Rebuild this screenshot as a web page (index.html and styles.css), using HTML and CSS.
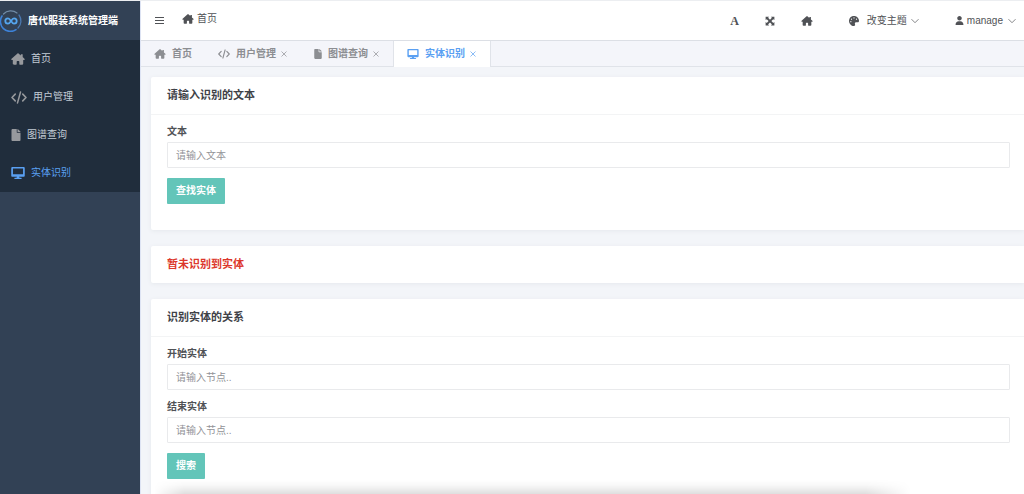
FILE: index.html
```html
<!DOCTYPE html>
<html lang="zh-CN">
<head>
<meta charset="utf-8">
<meta name="viewport" content="width=device-width, initial-scale=1">
<title>唐代服装系统管理端</title>
<link rel="stylesheet" href="styles.css">
</head>
<body>
<svg class="sprite" aria-hidden="true">
  <symbol id="home" viewBox="0 0 576 512"><path d="M510 296V456c0 22-18 40-40 40H368c-14 0-24-10-24-24V368c0-13-11-24-24-24H256c-13 0-24 11-24 24v104c0 14-10 24-24 24H106c-22 0-40-18-40-40V296H32c-30 0-42-36-20-56L266 18c13-11 31-11 44 0l98 86V64c0-9 7-16 16-16h48c9 0 16 7 16 16v110l76 66c22 20 10 56-20 56h-34z"/></symbol>
  <symbol id="code" viewBox="0 0 640 512"><path d="M170 120L40 256l130 136M470 120l130 136-130 136M380 40L260 472" fill="none" stroke="currentColor" stroke-width="62" stroke-linecap="round" stroke-linejoin="round"/></symbol>
  <symbol id="file" viewBox="0 0 384 512"><path d="M224 136V0H48C22 0 0 22 0 48v416c0 26 22 48 48 48h288c26 0 48-22 48-48V160H248c-13 0-24-11-24-24zM384 122v6H256V0h6c7 0 13 3 17 7l98 98c4 5 7 11 7 17z"/></symbol>
  <symbol id="desktop" viewBox="0 0 576 512"><path d="M528 0H48C21.500 0 0 21.500 0 48v320c0 26.500 21.500 48 48 48h192l-16 40h-72c-13.300 0-24 12-24 28s10.700 28 24 28h272c13.300 0 24-12 24-28s-10.700-28-24-28h-72l-16-40h192c26.500 0 48-21.500 48-48V48c0-26.500-21.500-48-48-48zm-24 310H72V66h432v244z"/></symbol>
  <symbol id="user" viewBox="0 0 448 512"><path d="M224 256c70.700 0 128-57.300 128-128S294.700 0 224 0 96 57.300 96 128s57.300 128 128 128zm46 48h-92C80 304 0 384 0 482c0 17 13 30 30 30h388c17 0 30-13 30-30 0-98-80-178-178-178z"/></symbol>
  <symbol id="palette" viewBox="0 0 512 512"><path d="M204.300 5C104.900 24.400 24.800 104.300 5.200 203.400c-37 187 131.700 326.400 258.800 306.700 41.200-6.400 61.400-54.600 42.500-91.700-23.100-45.400 9.900-98.400 60.900-98.400h79.700c35.800 0 64.800-29.600 64.900-65.300C511.500 97.100 368.100-26.900 204.300 5zM96 320c-17.700 0-32-14.300-32-32s14.300-32 32-32 32 14.300 32 32-14.300 32-32 32zm32-128c-17.700 0-32-14.300-32-32s14.300-32 32-32 32 14.300 32 32-14.300 32-32 32zm128-64c-17.700 0-32-14.300-32-32s14.300-32 32-32 32 14.300 32 32-14.300 32-32 32zm128 64c-17.700 0-32-14.300-32-32s14.300-32 32-32 32 14.300 32 32-14.300 32-32 32z"/></symbol>
  <symbol id="expand" viewBox="0 0 16 16"><path d="M1 1h5.500L5 2.800 8 5.800l3-3L9.500 1H15v5.500L13.200 5l-3 3 3 3L15 9.500V15H9.500l1.500-1.800-3-3-3 3L6.500 15H1V9.500L2.800 11l3-3-3-3L1 6.500z"/></symbol>
  <symbol id="menu" viewBox="0 0 9 9"><path d="M0 1.500h9M0 4.500h9M0 7.500h9" stroke="currentColor" stroke-width="1"/></symbol>
  <symbol id="down" viewBox="0 0 8 8"><path d="M.5 2.200L4 5.700l3.500-3.500" fill="none" stroke="currentColor" stroke-width=".7"/></symbol>
  <symbol id="close" viewBox="0 0 8 8"><path d="M1.500 1.500l5 5m0-5l-5 5" fill="none" stroke="currentColor" stroke-width=".7"/></symbol>
</svg>
<div class="app">
  <aside class="sidebar">
    <div class="brand">
      <svg class="logo" viewBox="0 0 22 22" aria-hidden="true">
        <g fill="none" stroke-linecap="round">
          <path d="M3.500 4A10 10 0 0 1 17 3" stroke="#718ca8" stroke-width="1.200"/>
          <path d="M19 5a10 10 0 0 1-1 13" stroke="#4b78b0" stroke-width="1.300"/>
          <path d="M16 19.700A10 10 0 0 1 2 6" stroke="#3d82d8" stroke-width="1.600"/>
          <path d="M11 11C9.500 8.800 8.900 8.300 8 8.300a2.700 2.700 0 0 0 0 5.400c1.200 0 1.900-1 3-2.700s1.800-2.700 3-2.700a2.700 2.700 0 0 1 0 5.400c-.9 0-1.500-.5-3-2.700z" stroke="#55a5ee" stroke-width="1.800"/>
        </g>
      </svg>
      <span>唐代服装系统管理端</span>
    </div>
    <nav class="nav">
      <a class="nav-item" href="#"><svg class="icon-lg"><use href="#home"/></svg>首页</a>
      <a class="nav-item" href="#"><svg class="icon-code"><use href="#code"/></svg>用户管理</a>
      <a class="nav-item" href="#"><svg class="icon-file"><use href="#file"/></svg>图谱查询</a>
      <a class="nav-item active" href="#"><svg class="icon-lg"><use href="#desktop"/></svg>实体识别</a>
    </nav>
  </aside>
  <div class="main">
    <header class="topbar">
      <button class="tool" type="button" aria-label="菜单"><svg class="icon-sm"><use href="#menu"/></svg></button>
      <a class="crumb" href="#"><svg class="icon"><use href="#home"/></svg>首页</a>
      <div class="tools">
        <button class="tool letter" type="button">A</button>
        <button class="tool" type="button" aria-label="全屏"><svg class="icon-sq"><use href="#expand"/></svg></button>
        <button class="tool" type="button" aria-label="主页"><svg class="icon"><use href="#home"/></svg></button>
      </div>
      <button class="tool theme" type="button"><svg class="icon-sq"><use href="#palette"/></svg><span>改变主题</span><svg class="tiny"><use href="#down"/></svg></button>
      <button class="tool account" type="button"><svg class="icon-sm"><use href="#user"/></svg><span>manage</span><svg class="tiny"><use href="#down"/></svg></button>
    </header>
    <nav class="tabs">
      <div class="tab"><a href="#"><svg class="icon"><use href="#home"/></svg>首页</a></div>
      <div class="tab"><a href="#"><svg class="icon"><use href="#code"/></svg>用户管理</a><button type="button" aria-label="关闭用户管理"><svg class="tiny"><use href="#close"/></svg></button></div>
      <div class="tab"><a href="#"><svg class="icon-tabfile"><use href="#file"/></svg>图谱查询</a><button type="button" aria-label="关闭图谱查询"><svg class="tiny"><use href="#close"/></svg></button></div>
      <div class="tab current"><a href="#"><svg class="icon"><use href="#desktop"/></svg>实体识别</a><button type="button" aria-label="关闭实体识别"><svg class="tiny"><use href="#close"/></svg></button></div>
    </nav>
    <main class="content">
      <section class="card">
        <h2 class="card-title">请输入识别的文本</h2>
        <form class="card-body roomy">
          <label for="text">文本</label>
          <input id="text" type="text" placeholder="请输入文本">
          <button class="submit" type="button">查找实体</button>
        </form>
      </section>
      <section class="card">
        <h2 class="card-title alert">暂未识别到实体</h2>
      </section>
      <section class="card">
        <h2 class="card-title">识别实体的关系</h2>
        <form class="card-body roomy">
          <label for="start">开始实体</label>
          <input id="start" type="text" placeholder="请输入节点..">
          <label for="end">结束实体</label>
          <input id="end" type="text" placeholder="请输入节点..">
          <button class="submit" type="button">搜索</button>
        </form>
      </section>
    </main>
  </div>
</div>
<div class="bottom-shade"></div>
</body>
</html>
```
FILE: styles.css
```css
* { box-sizing: border-box; }
body {
  margin: 0;
  height: 100vh;
  overflow: hidden;
  background: #f3f5f9;
  color: #505256;
  font: 10px/16px "Liberation Sans", "Noto Sans CJK SC", sans-serif;
}
a { color: inherit; text-decoration: none; }
button { padding: 0; border: 0; background: none; color: inherit; font: inherit; cursor: pointer; }
svg { display: block; flex: none; fill: currentColor; }
.sprite { position: absolute; width: 0; height: 0; }
.icon { width: 12px; height: 10px; }
.icon-lg { width: 14px; height: 12px; }
.icon-code { width: 16px; height: 13px; }
.icon-file { width: 10px; height: 12px; }
.icon-tabfile { width: 8px; height: 10px; }
.icon-sq { width: 10px; height: 10px; }
.icon-sm { width: 9px; height: 9px; }
.tiny { width: 8px; height: 8px; }

.app { display: flex; height: 100%; border-top: 1px solid #eceef1; }
.sidebar { flex: 0 0 140px; background: #324155; }
.brand {
  display: flex;
  align-items: center;
  gap: 6px;
  height: 39px;
  color: #fff;
  font-weight: 700;
  white-space: nowrap;
}
.logo { width: 22px; height: 22px; }
.nav { background: #202d3c; color: #c3ccd6; }
.nav-item { display: flex; align-items: center; gap: 6px; height: 38px; padding-left: 11px; }
.nav-item svg { color: #97999d; }
.nav-item.active, .nav-item.active svg { color: #5aa0f2; }

.main { display: flex; flex: 1; flex-direction: column; min-width: 0; border-left: 1px solid #dde3f3; }
.topbar {
  display: flex;
  flex: none;
  align-items: center;
  height: 40px;
  padding: 0 8px 0 14px;
  border-bottom: 1px solid #dcdfe5;
  background: #fff;
}
.tool { display: flex; align-items: center; }
.crumb { display: flex; align-items: center; gap: 3px; margin: 0 auto 3px 18px; }
.tools { display: flex; align-items: center; gap: 26px; }
.letter { font: 700 12px/16px "Liberation Serif", serif; }
.theme { gap: 8px; margin-left: 36px; }
.theme .tiny { margin-left: -4px; }
.account { gap: 3px; margin-left: 36px; }
.account .tiny { margin-left: 2px; }

.tabs { display: flex; flex: none; height: 26px; border-bottom: 1px solid #e0e3e9; background: #f4f5fa; color: #8c8e92; font-weight: 700; }
.tab { display: flex; align-items: center; gap: 4px; height: 26px; padding: 0 13px; }
.tab a { display: flex; align-items: center; gap: 6px; }
.tab.current { border: solid #e0e3e9; border-width: 0 1px; background: #fff; color: #5aa0f2; }

.content { padding: 10px 0 0 10px; }
.card { margin-bottom: 16px; border-radius: 2px 0 0 2px; background: #fff; box-shadow: 0 1px 4px #e5e8ed; }
.card-title { margin: 0; padding: 10px 16px; color: #404247; font-size: 11px; line-height: 17px; font-weight: 700; }
.card-title.alert { color: #dc372b; }
.card-body { padding: 10px 14px 12px 16px; border-top: 1px solid #f3f4f5; }
.card-body.roomy { padding-bottom: 26px; }
.card-body label { display: block; line-height: 14px; margin-bottom: 3px; font-weight: 700; }
.card-body input {
  display: block;
  width: 100%;
  height: 26px;
  margin-bottom: 10px;
  padding: 0 8px;
  border: 1px solid #e9eaec;
  border-radius: 1px;
  background: #fff;
  color: inherit;
  font: inherit;
}
.card-body input::placeholder { color: #929397; opacity: 1; }
.submit { height: 26px; padding: 0 9px; border-radius: 1px; background: #63c5b9; color: #fff; font-weight: 700; }

.bottom-shade {
  position: fixed;
  inset: auto 11% 0 15%;
  height: 14px;
  background: linear-gradient(to bottom, transparent, #00000008 40%, #00000020);
  mask-image: linear-gradient(to right, transparent, #000 4%, #000 94%, transparent);
  pointer-events: none;
}
```
